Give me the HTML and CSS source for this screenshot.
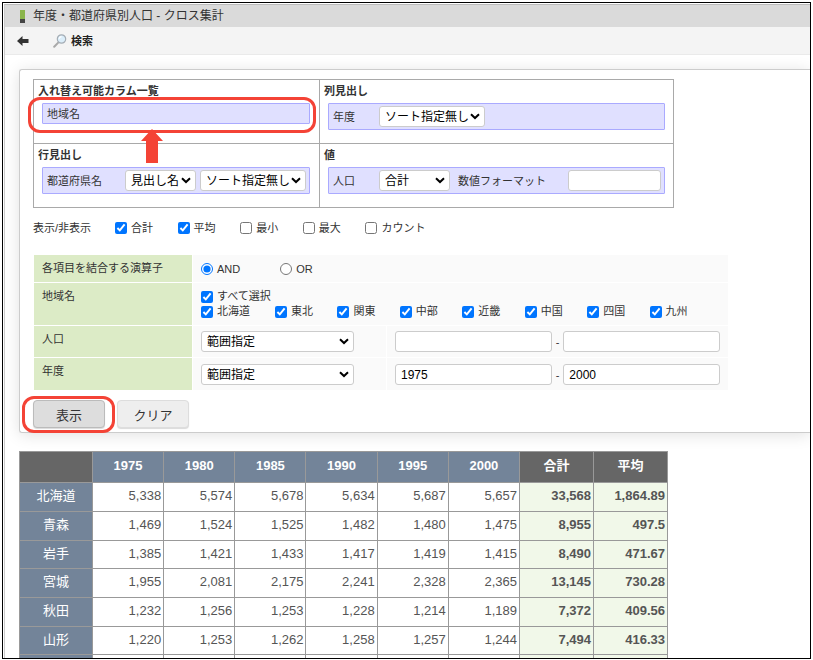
FILE: index.html
```html
<!DOCTYPE html>
<html lang="ja">
<head>
<meta charset="utf-8">
<title>年度・都道府県別人口 - クロス集計</title>
<link rel="stylesheet" href="styles.css">
</head>
<body>
<div class="frame">
<div class="window">
  <header class="titlebar"><span class="mark"></span><h1>年度・都道府県別人口 - クロス集計</h1></header>
  <nav class="toolbar">
    <button type="button" class="tool" aria-label="戻る">
      <svg width="12" height="10" viewBox="0 0 12 10"><path d="M0 5 5.5 0V3H11.5V7H5.5V10Z" fill="#333"/></svg>
    </button>
    <button type="button" class="tool search">
      <svg width="14" height="14" viewBox="0 0 14 14"><path d="M1.2 12.8 5.2 8.6" stroke="#a9a9a9" stroke-width="2" stroke-linecap="round"/><circle cx="8.5" cy="5" r="4.2" fill="#dceefa" stroke="#a5adb5" stroke-width="1.2"/><path d="M6.2 4.8A2.5 2.5 0 0 1 8.5 2.6" fill="none" stroke="#fff" stroke-width="1.2"/></svg>
      検索
    </button>
  </nav>
  <main>
    <form class="panel">
      <div class="layout">
        <section class="cell">
          <h2>入れ替え可能カラム一覧</h2>
          <div class="field short marked">地域名
            <svg class="pointer" width="22" height="34" viewBox="0 0 22 34"><path d="M11 0 22 12H17V34H5V12H0Z" fill="#f44336"/></svg>
          </div>
        </section>
        <section class="cell">
          <h2>列見出し</h2>
          <div class="field"><label class="name" for="s1">年度</label><select id="s1" class="wide"><option>ソート指定無し</option></select></div>
        </section>
        <section class="cell">
          <h2>行見出し</h2>
          <div class="field"><label class="name long" for="s2">都道府県名</label><select id="s2" class="narrow"><option>見出し名</option></select><select class="wide" aria-label="ソート"><option>ソート指定無し</option></select></div>
        </section>
        <section class="cell">
          <h2>値</h2>
          <div class="field"><label class="name" for="s3">人口</label><select id="s3" class="narrow"><option>合計</option></select><label class="format" for="fmt">数値フォーマット</label><input type="text" id="fmt" class="fmt"></div>
        </section>
      </div>

      <div class="toggles">
        <span>表示/非表示</span>
        <div class="toggle-list">
          <label class="opt"><input type="checkbox" checked>合計</label>
          <label class="opt"><input type="checkbox" checked>平均</label>
          <label class="opt"><input type="checkbox">最小</label>
          <label class="opt"><input type="checkbox">最大</label>
          <label class="opt"><input type="checkbox">カウント</label>
        </div>
      </div>

      <div class="filters">
        <div class="term">各項目を結合する演算子</div>
        <div class="value full radios">
          <label class="opt"><input type="radio" name="op" checked>AND</label>
          <label class="opt"><input type="radio" name="op">OR</label>
        </div>
        <div class="term">地域名</div>
        <div class="value full regions">
          <label class="opt"><input type="checkbox" checked>すべて選択</label>
          <div class="region-list">
            <label class="opt"><input type="checkbox" checked>北海道</label>
            <label class="opt"><input type="checkbox" checked>東北</label>
            <label class="opt"><input type="checkbox" checked>関東</label>
            <label class="opt"><input type="checkbox" checked>中部</label>
            <label class="opt"><input type="checkbox" checked>近畿</label>
            <label class="opt"><input type="checkbox" checked>中国</label>
            <label class="opt"><input type="checkbox" checked>四国</label>
            <label class="opt"><input type="checkbox" checked>九州</label>
          </div>
        </div>
        <label class="term" for="r1">人口</label>
        <div class="value"><select id="r1" class="range"><option>範囲指定</option></select></div>
        <div class="value between"><input type="text" aria-label="人口 から"><span>-</span><input type="text" aria-label="人口 まで"></div>
        <label class="term" for="r2">年度</label>
        <div class="value last"><select id="r2" class="range"><option>範囲指定</option></select></div>
        <div class="value last between"><input type="text" value="1975" aria-label="年度 から"><span>-</span><input type="text" value="2000" aria-label="年度 まで"></div>
      </div>

      <div class="actions">
        <span class="marked"><button type="button" class="btn primary">表示</button></span>
        <button type="reset" class="btn">クリア</button>
      </div>
    </form>

    <table class="result">
      <colgroup><col class="c-name"><col span="6" class="c-year"><col span="2" class="c-sum"></colgroup>
      <thead><tr><td class="dark"></td><th>1975</th><th>1980</th><th>1985</th><th>1990</th><th>1995</th><th>2000</th><th class="dark">合計</th><th class="dark">平均</th></tr></thead>
      <tbody>
        <tr><th>北海道</th><td>5,338</td><td>5,574</td><td>5,678</td><td>5,634</td><td>5,687</td><td>5,657</td><td class="sum">33,568</td><td class="sum">1,864.89</td></tr>
        <tr><th>青森</th><td>1,469</td><td>1,524</td><td>1,525</td><td>1,482</td><td>1,480</td><td>1,475</td><td class="sum">8,955</td><td class="sum">497.5</td></tr>
        <tr><th>岩手</th><td>1,385</td><td>1,421</td><td>1,433</td><td>1,417</td><td>1,419</td><td>1,415</td><td class="sum">8,490</td><td class="sum">471.67</td></tr>
        <tr><th>宮城</th><td>1,955</td><td>2,081</td><td>2,175</td><td>2,241</td><td>2,328</td><td>2,365</td><td class="sum">13,145</td><td class="sum">730.28</td></tr>
        <tr><th>秋田</th><td>1,232</td><td>1,256</td><td>1,253</td><td>1,228</td><td>1,214</td><td>1,189</td><td class="sum">7,372</td><td class="sum">409.56</td></tr>
        <tr><th>山形</th><td>1,220</td><td>1,253</td><td>1,262</td><td>1,258</td><td>1,257</td><td>1,244</td><td class="sum">7,494</td><td class="sum">416.33</td></tr>
        <tr><th></th><td></td><td></td><td></td><td></td><td></td><td></td><td class="sum"></td><td class="sum"></td></tr>
      </tbody>
    </table>
  </main>
</div>
</div>
</body>
</html>
```
FILE: styles.css
```css
* { box-sizing: border-box; }
body {
  margin: 0;
  padding: 2px 2px 1px;
  height: 100vh;
  background: #fff;
  color: #333;
  font: 11px/16px "Liberation Sans", "Noto Sans CJK JP", sans-serif;
}
h1, h2 { margin: 0; font-size: inherit; }
.frame {
  height: 100%;
  border: 1px solid #000;
  padding: 1px 0 0 1px;
  overflow: hidden;
}
.window {
  height: 100%;
  border-left: 1px solid #ccc;
  border-top: 1px solid #bbb;
  overflow: hidden;
}

.titlebar {
  display: flex;
  align-items: center;
  gap: 8px;
  height: 22px;
  padding-left: 15px;
  background: #dadada;
}
.titlebar h1 { font-size: 12px; font-weight: normal; }
.mark { width: 5px; height: 13px; background: #8bb54b; border-bottom: 4px solid #444; }
.toolbar {
  display: flex;
  align-items: center;
  gap: 24px;
  height: 28px;
  padding-left: 12px;
  background: #f4f4f4;
  border-bottom: 1px solid #eaeaea;
}
.tool {
  display: flex;
  align-items: center;
  gap: 4px;
  padding: 0;
  border: 0;
  background: none;
  color: #222;
  font: bold 11px/16px "Liberation Sans", "Noto Sans CJK JP", sans-serif;
}

main { padding: 14px 0 0 14px; }
.panel {
  border: 1px solid #ccc;
  border-right: 0;
  border-radius: 3px 0 0 3px;
  padding: 9px 13px 4px;
  box-shadow: 0 2px 16px rgba(0, 0, 0, .12);
}

.layout {
  display: grid;
  grid-template-columns: 286fr 354fr;
  max-width: 641px;
  border: solid #a9a9a9;
  border-width: 1px 0 0 1px;
}
.cell {
  min-height: 64px;
  padding-top: 3px;
  border: solid #a9a9a9;
  border-width: 0 1px 1px 0;
}
.cell h2 { padding: 0 4px; }
.field {
  display: flex;
  align-items: center;
  gap: 4px;
  height: 27px;
  margin: 4px 8px 0;
  padding: 0 3px 0 4px;
  background: #e0e0ff;
  border: 1px solid #aaf;
  border-radius: 1px;
}
.cell:nth-child(odd) .field { margin-right: 9px; }
.field.short { height: 21px; }
.name { width: 42px; }
.name.long { width: 74px; }
.format { flex: 1; padding-left: 4px; }

.marked { position: relative; }
.marked::after {
  content: "";
  position: absolute;
  inset: -7px -7px -10px -15px;
  border: 3px solid #f44336;
  border-radius: 12px;
  pointer-events: none;
}
.pointer { position: absolute; left: 98px; top: 25px; z-index: 1; }

select, input[type="text"] {
  height: 21px;
  margin: 0;
  border: 1px solid #ccc;
  border-radius: 3px;
  background-color: #fff;
  color: #000;
  font: 12px "Liberation Sans", "Noto Sans CJK JP", sans-serif;
}
select {
  appearance: none;
  padding: 0 0 0 5px;
  background: #fff url("data:image/svg+xml,%3Csvg xmlns='http://www.w3.org/2000/svg' width='10' height='7' viewBox='0 0 10 7'%3E%3Cpath d='M1 1.2 5 5 9 1.2' fill='none' stroke='%23000' stroke-width='2'/%3E%3C/svg%3E") no-repeat right 4px center;
}
input[type="text"] { padding: 0 5px; }
.wide { width: 106px; }
.narrow { width: 71px; }
.fmt { width: 93px; }
.range { display: block; width: 153px; }

.opt { display: flex; align-items: center; gap: 4px; white-space: nowrap; }
.opt input { width: 12px; height: 12px; margin: 0; }

.toggles { display: flex; margin-top: 12px; }
.toggles > span { width: 82px; }
.toggle-list { display: grid; grid-template-columns: repeat(5, 1fr); width: 313px; }

.filters {
  display: grid;
  grid-template-columns: minmax(0, 158fr) minmax(0, 193fr) minmax(0, 341fr);
  gap: 1px;
  max-width: 694px;
  margin: 19px 0 0 1px;
}
.term { padding: 5px 8px 6px; background: #dcebc6; }
.value { padding: 5px 8px; background: #fafafa; }
.value.last { padding-top: 6px; }
.full { grid-column: span 2; }
.radios { display: flex; gap: 40px; }
.regions { line-height: 15px; padding: 6px 16px 6px 8px; }
.region-list { display: grid; grid-template-columns: 74px repeat(7, 1fr); }
.between { display: flex; align-items: center; gap: 4px; }
.between input { flex: 1; min-width: 0; }

.actions { display: flex; gap: 12px; margin-top: 10px; }
.actions .marked::after { inset: -4px -10px -5px -11px; }
.btn {
  display: block;
  width: 72px;
  height: 28px;
  padding: 0;
  border: 1px solid #ddd;
  border-radius: 4px;
  background: #eee;
  color: #333;
  font: 13px "Liberation Sans", "Noto Sans CJK JP", sans-serif;
  box-shadow: 0 1px 1px rgba(0, 0, 0, .15);
}
.primary { background: #ddd; border-color: #bbb; }

.result {
  width: 649px;
  margin-top: 18px;
  border-collapse: collapse;
  table-layout: fixed;
  font-size: 13px;
  line-height: 18px;
  color: #555;
}
.c-name { width: 73px; }
.c-sum { width: 74px; }
.result th, .result td { padding: 0 2px 2px; border: 1px solid #999; }
.result td { text-align: right; }
.result th { background: #738499; color: #fff; text-align: center; }
.result tbody th { font-weight: normal; }
.result .dark { background: #666; }
.result .sum { background: #f1f8e9; font-weight: bold; }
.result thead tr { height: 31px; }
.result tbody tr { height: 29px; }
.result tbody tr:nth-child(3n) { height: 28px; }
```
